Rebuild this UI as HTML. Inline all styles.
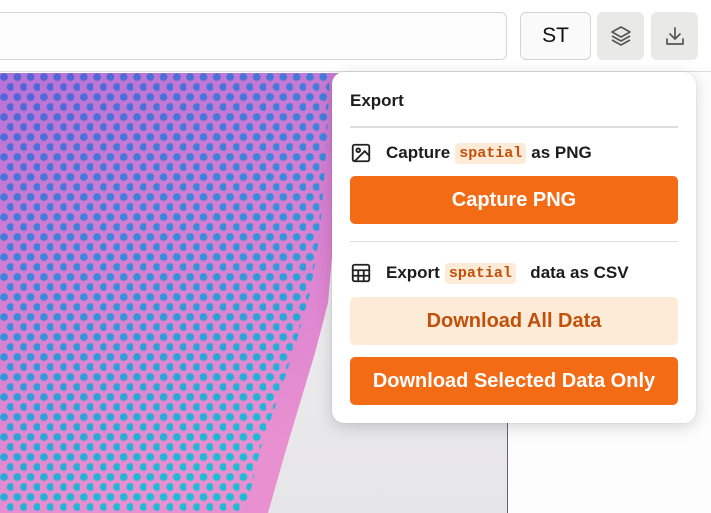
<!DOCTYPE html>
<html><head><meta charset="utf-8"><style>
*{box-sizing:border-box;margin:0;padding:0}
body{width:711px;height:513px;overflow:hidden;background:#fff;font-family:"Liberation Sans",sans-serif;position:relative;color:#1c1c1c}
.top{position:absolute;left:0;top:0;width:711px;height:72px;background:#fff;border-bottom:1px solid #ddd}
.inp{position:absolute;left:-10px;top:12px;width:517px;height:48px;border:1px solid #d4d4d4;border-radius:6px;background:#fcfcfc}
.st{position:absolute;left:520px;top:12px;width:71px;height:48px;border:1px solid #d4d4d4;border-radius:6px;background:#fafafa;font-size:21px;text-align:center;line-height:46px;color:#111}
.ib{position:absolute;top:12px;width:47px;height:48px;border-radius:6px;background:#e9e9e7;display:flex;align-items:center;justify-content:center}
.img{position:absolute;left:0;top:73px;width:508px;height:440px;border-right:1px solid #666;overflow:hidden}
.rest{position:absolute;left:509px;top:73px;width:202px;height:440px;background:#fdfdfd}
.panel{position:absolute;left:332px;top:72px;width:364px;height:351px;background:#fff;border-radius:12px;box-shadow:0 4px 16px rgba(0,0,0,.16),0 0 1px rgba(0,0,0,.2)}
.h{position:absolute;left:18px;top:19px;font-weight:bold;font-size:17px}
.div{position:absolute;left:18px;width:328px;height:2px;background:#ddd}
.row{position:absolute;left:18px;font-weight:bold;font-size:17px;display:flex;align-items:center;white-space:nowrap}
.code{font-family:"Liberation Mono",monospace;color:#c2500a;background:#fdebd8;border-radius:4px;padding:2px 4px;font-size:15px;font-weight:bold;margin:0 5px}
.btn{position:absolute;left:18px;width:328px;height:48px;border-radius:5px;text-align:center;line-height:48px;font-size:20px;font-weight:bold}
.o{background:#f46b16;color:#fff}
.l{background:#fdebd8;color:#c2500a}
</style></head><body>
<div class="top">
<div class="inp"></div>
<div class="st">ST</div>
<div class="ib" style="left:597px"><svg width="24" height="24" viewBox="0 0 24 24" fill="none" stroke="#555" stroke-width="1.6" stroke-linejoin="round"><path d="M12 3l9 5-9 5-9-5z"/><path d="M3 12l9 5 9-5"/><path d="M3 16l9 5 9-5"/></svg></div>
<div class="ib" style="left:651px"><svg width="24" height="24" viewBox="0 0 24 24" fill="none" stroke="#555" stroke-width="1.7" stroke-linecap="round" stroke-linejoin="round"><path d="M4 15v5h16v-5"/><path d="M12 4v11"/><path d="M7 10l5 5 5-5"/></svg></div>
</div>
<div class="img">
<svg width="508" height="440" viewBox="0 0 508 440">
<defs>
<linearGradient id="tg" x1="0" y1="0" x2="0.3" y2="1"><stop offset="0" stop-color="#b573d6"/><stop offset=".5" stop-color="#d67fd2"/><stop offset="1" stop-color="#e890d0"/></linearGradient>
<linearGradient id="dg" x1="0" y1="0" x2="0.35" y2="1"><stop offset="0" stop-color="#5660d8"/><stop offset=".45" stop-color="#3c86dc"/><stop offset="1" stop-color="#1ebcd6"/></linearGradient>
<pattern id="p" width="13.3" height="20" patternUnits="userSpaceOnUse"><circle cx="4" cy="4" r="3.9" fill="#fff"/><circle cx="10.65" cy="14" r="3.9" fill="#fff"/></pattern>
<mask id="m"><rect width="508" height="440" fill="url(#p)"/></mask>
<linearGradient id="bg" x1="0" y1="0" x2="0" y2="1"><stop offset="0" stop-color="#f2f1f3"/><stop offset="1" stop-color="#e6e5e8"/></linearGradient>
</defs>
<rect width="508" height="440" fill="url(#bg)"/>
<path d="M0 0H340L338 80 334 160 328 230 315 280 300 330 285 380 268 440H0Z" fill="url(#tg)"/>
<path d="M0 0H330L326 80 320 160 310 220 296 270 280 320 262 370 245 440H0Z" fill="url(#dg)" mask="url(#m)"/>
</svg>
</div>
<div class="rest"></div>
<div class="panel">
<div class="h">Export</div>
<div class="div" style="top:54px"></div>
<div class="row" style="top:70px"><svg width="22" height="22" viewBox="0 0 24 24" fill="none" stroke="#222" stroke-width="2"><rect x="3" y="3" width="18" height="18" rx="2"/><circle cx="9" cy="9" r="2"/><path d="M21 15l-5-5L5 21"/></svg><span style="margin-left:14px">Capture</span><span class="code">spatial</span>as PNG</div>
<div class="btn o" style="top:104px">Capture PNG</div>
<div class="div" style="top:169px;height:1px"></div>
<div class="row" style="top:190px"><svg width="22" height="22" viewBox="0 0 24 24" fill="none" stroke="#222" stroke-width="2"><rect x="3" y="3" width="18" height="18" rx="2"/><path d="M3 9h18M3 15h18M9 9v12M15 9v12"/></svg><span style="margin-left:14px">Export</span><span class="code">spatial</span>&nbsp; data as CSV</div>
<div class="btn l" style="top:225px">Download All Data</div>
<div class="btn o" style="top:285px">Download Selected Data Only</div>
</div>
</body></html>
